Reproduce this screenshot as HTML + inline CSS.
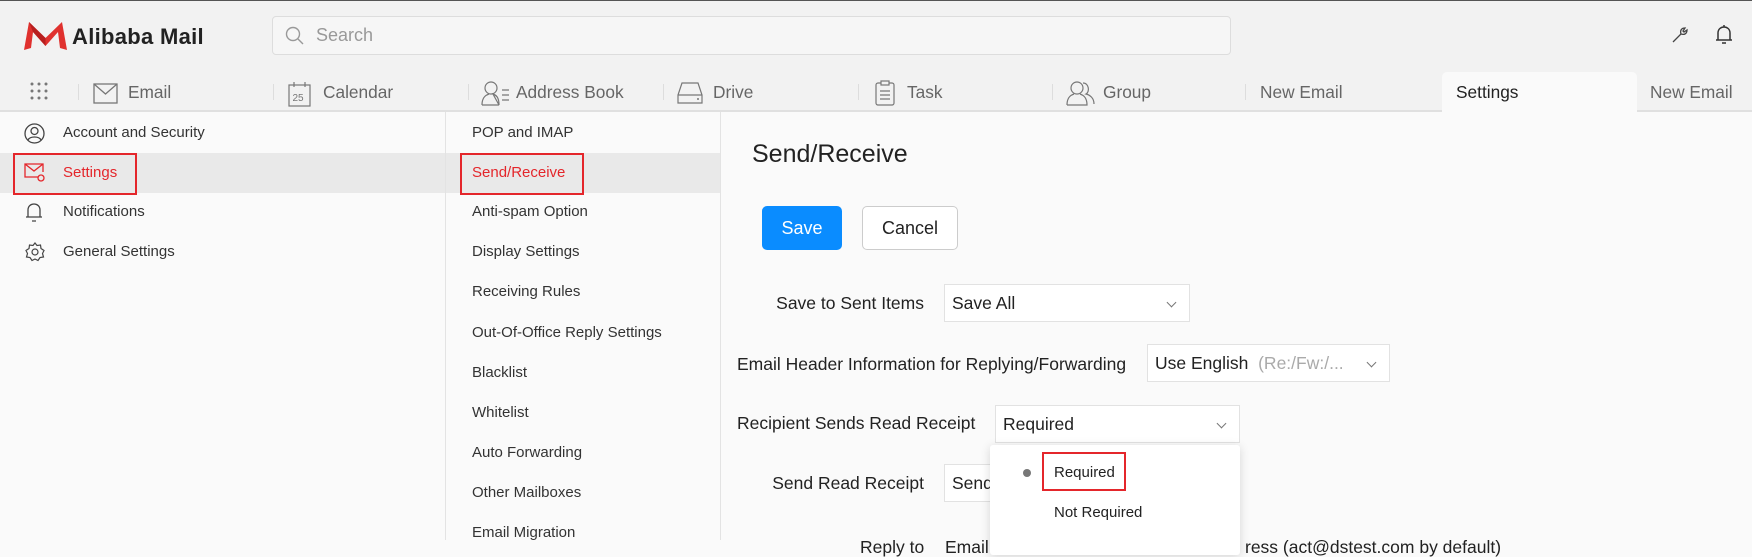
<!DOCTYPE html>
<html><head><meta charset="utf-8"><style>
*{margin:0;padding:0;box-sizing:border-box}
body{width:1752px;height:540px;overflow:hidden;background:#fafafa;font-family:"Liberation Sans",sans-serif;position:relative;color:#333}
.a{position:absolute}
.top{left:0;top:0;width:1752px;height:112px;background:#f2f2f2;border-top:1px solid #555}
.navline{left:0;top:110px;width:1752px;height:2px;background:#e0e0e0}
.nav{font-size:17.3px;color:#666;top:82px;line-height:20px}
.sep{width:1px;height:16px;background:#ddd;top:84px}
.item{font-size:15px;color:#333;line-height:20px}
.lbl{font-size:17.5px;color:#222;line-height:20px}
.sel{background:#fff;border:1px solid #e2e2e2;font-size:17.5px;color:#222;padding-left:7px;line-height:36px}
.chev{position:absolute;right:14px;top:14px;width:7px;height:7px;border-right:1.3px solid #777;border-bottom:1.3px solid #777;transform:rotate(45deg)}
.red{border:2px solid #e4262b}
</style></head><body>
<div class="a top"></div>
<div class="a navline"></div>
<svg class="a" style="left:24px;top:22px" width="43" height="28" viewBox="0 0 43 28"><path d="M0 28 L5 0 L21.5 16 L38 0 L43 28 L36 26 L34 10 L21.5 24 L9 10 L7 26Z" fill="#e0312e"/><path d="M5 0 L21.5 16 L21.5 24 L9 10Z" fill="#b81f1f"/></svg>
<div class="a" style="left:72px;top:24px;font-size:22px;font-weight:bold;color:#222;letter-spacing:.3px">Alibaba Mail</div>
<div class="a" style="left:272px;top:16px;width:959px;height:39px;border:1px solid #ddd;border-radius:4px;background:#f6f6f6"></div>
<svg class="a" style="left:285px;top:26px" width="20" height="20" viewBox="0 0 20 20"><circle cx="8" cy="8" r="6.5" fill="none" stroke="#999" stroke-width="1.4"/><path d="M13 13l5 5" stroke="#999" stroke-width="1.4"/></svg>
<div class="a" style="left:316px;top:25px;font-size:18px;color:#999">Search</div>
<svg class="a" style="left:1670px;top:25px" width="20" height="20" viewBox="0 0 20 20"><path d="M3 17 L11 9 C10 6 11 3 15 3 L13 6 L14 7 L17 5 C17 9 14 10 11 9" fill="none" stroke="#444" stroke-width="1.3"/></svg>
<svg class="a" style="left:1714px;top:24px" width="20" height="22" viewBox="0 0 20 22"><path d="M4 16 V9 C4 5 7 3 10 3 C13 3 16 5 16 9 V16 H4 Z M2 16 H18 M8 19 H12 M10 1 V3" fill="none" stroke="#333" stroke-width="1.5"/></svg>
<svg class="a" style="left:30px;top:82px" width="20" height="20"><g fill="#777"><circle cx="2" cy="2" r="1.5"/><circle cx="9" cy="2" r="1.5"/><circle cx="16" cy="2" r="1.5"/><circle cx="2" cy="9" r="1.5"/><circle cx="9" cy="9" r="1.5"/><circle cx="16" cy="9" r="1.5"/><circle cx="2" cy="16" r="1.5"/><circle cx="9" cy="16" r="1.5"/><circle cx="16" cy="16" r="1.5"/></g></svg>
<div class="a sep" style="left:78px"></div>
<svg class="a" style="left:93px;top:83px" width="25" height="21"><rect x="1" y="1" width="23" height="19" fill="none" stroke="#777" stroke-width="1.3"/><path d="M1 1 L12.5 11 L24 1" fill="none" stroke="#777" stroke-width="1.3"/></svg>
<div class="a nav" style="left:128px">Email</div>
<div class="a sep" style="left:273px"></div>
<svg class="a" style="left:288px;top:81px" width="24" height="26"><rect x="1" y="4" width="21" height="21" fill="none" stroke="#777" stroke-width="1.2"/><path d="M6 1v5M17 1v5" stroke="#777" stroke-width="1.2"/><text x="4.5" y="20" font-size="10" fill="#777" font-family="Liberation Sans">25</text></svg>
<div class="a nav" style="left:323px">Calendar</div>
<div class="a sep" style="left:468px"></div>
<svg class="a" style="left:481px;top:80px" width="30" height="26"><circle cx="10" cy="8" r="6" fill="none" stroke="#777" stroke-width="1.2"/><path d="M1 25 C1 17 5 15 8 14 M12 14 C15 15 18 17 18 25 Z M1 25 H18" fill="none" stroke="#777" stroke-width="1.2"/><path d="M21 10h7M21 15h7M21 20h7" stroke="#777" stroke-width="1.2"/></svg>
<div class="a nav" style="left:516px">Address Book</div>
<div class="a sep" style="left:663px"></div>
<svg class="a" style="left:677px;top:82px" width="26" height="22"><path d="M1 13 L5 1 H21 L25 13 V21 H1Z M1 13 H25" fill="none" stroke="#777" stroke-width="1.2"/><circle cx="21" cy="17" r="1" fill="#777"/></svg>
<div class="a nav" style="left:713px">Drive</div>
<div class="a sep" style="left:858px"></div>
<svg class="a" style="left:875px;top:80px" width="20" height="26"><rect x="1" y="3" width="18" height="22" rx="2" fill="none" stroke="#777" stroke-width="1.2"/><rect x="6" y="1" width="8" height="4" fill="#f2f2f2" stroke="#777" stroke-width="1.2"/><path d="M5 11h10M5 15h10M5 19h10" stroke="#777" stroke-width="1.2"/></svg>
<div class="a nav" style="left:907px">Task</div>
<div class="a sep" style="left:1052px"></div>
<svg class="a" style="left:1066px;top:80px" width="30" height="26"><circle cx="11" cy="8" r="6" fill="none" stroke="#777" stroke-width="1.2"/><path d="M1 25 C1 17 5 15 8 14 M14 14 C17 15 21 17 21 25 H1" fill="none" stroke="#777" stroke-width="1.2"/><path d="M17 3 C23 3 24 12 20 14 C24 15 28 18 28 24" fill="none" stroke="#777" stroke-width="1.2"/></svg>
<div class="a nav" style="left:1103px">Group</div>
<div class="a sep" style="left:1245px"></div>
<div class="a nav" style="left:1260px">New Email</div>
<div class="a" style="left:1442px;top:72px;width:195px;height:40px;background:#fafafa;border-radius:5px 5px 0 0"></div>
<div class="a nav" style="left:1456px;color:#222">Settings</div>
<div class="a nav" style="left:1650px">New Email</div>
<div class="a" style="left:0;top:153px;width:720px;height:40px;background:#e9e9e9"></div>
<div class="a" style="left:445px;top:112px;width:1px;height:428px;background:#e3e3e3"></div>
<div class="a" style="left:720px;top:112px;width:1px;height:428px;background:#e3e3e3"></div>
<svg class="a" style="left:24px;top:123px" width="21" height="21"><circle cx="10.5" cy="10.5" r="9.5" fill="none" stroke="#444" stroke-width="1.3"/><circle cx="10.5" cy="8" r="3.5" fill="none" stroke="#444" stroke-width="1.3"/><path d="M4 17 C6 13 15 13 17 17" fill="none" stroke="#444" stroke-width="1.3"/></svg>
<div class="a item" style="left:63px;top:123px">Account and Security</div>
<svg class="a" style="left:24px;top:163px" width="22" height="20"><path d="M14 14 H1 V1 H19 V9" fill="none" stroke="#e4262b" stroke-width="1.3"/><path d="M1 1 L10 8 L19 1" fill="none" stroke="#e4262b" stroke-width="1.3"/><circle cx="17" cy="15" r="3" fill="none" stroke="#e4262b" stroke-width="1.3"/></svg>
<div class="a item" style="left:63px;top:163px;color:#e4262b">Settings</div>
<div class="a red" style="left:13px;top:153px;width:124px;height:42px"></div>
<svg class="a" style="left:25px;top:202px" width="18" height="21"><path d="M3 15 V8 C3 4 6 2 9 2 C12 2 15 4 15 8 V15 Z M1 15 H17 M7 19 H11" fill="none" stroke="#444" stroke-width="1.3"/></svg>
<div class="a item" style="left:63px;top:202px">Notifications</div>
<svg class="a" style="left:25px;top:242px" width="20" height="20" viewBox="0 0 20 20"><path d="M10 1 L12 3.5 L15.5 3 L16 6.5 L19 8.5 L17.5 11.5 L18.5 15 L15 15.5 L13 18.5 L10 17 L7 18.5 L5 15.5 L1.5 15 L2.5 11.5 L1 8.5 L4 6.5 L4.5 3 L8 3.5Z" fill="none" stroke="#444" stroke-width="1.2"/><circle cx="10" cy="10" r="3" fill="none" stroke="#444" stroke-width="1.2"/></svg>
<div class="a item" style="left:63px;top:242px">General Settings</div>
<div class="a item" style="left:472px;top:123px">POP and IMAP</div>
<div class="a item" style="left:472px;top:163px;color:#e4262b">Send/Receive</div>
<div class="a red" style="left:460px;top:153px;width:124px;height:42px"></div>
<div class="a item" style="left:472px;top:202px">Anti-spam Option</div>
<div class="a item" style="left:472px;top:242px">Display Settings</div>
<div class="a item" style="left:472px;top:282px">Receiving Rules</div>
<div class="a item" style="left:472px;top:323px">Out-Of-Office Reply Settings</div>
<div class="a item" style="left:472px;top:363px">Blacklist</div>
<div class="a item" style="left:472px;top:403px">Whitelist</div>
<div class="a item" style="left:472px;top:443px">Auto Forwarding</div>
<div class="a item" style="left:472px;top:483px">Other Mailboxes</div>
<div class="a item" style="left:472px;top:523px">Email Migration</div>
<div class="a" style="left:752px;top:140px;font-size:25px;color:#222">Send/Receive</div>
<div class="a" style="left:762px;top:206px;width:80px;height:44px;background:#0a8cff;border-radius:5px;color:#fff;font-size:18px;line-height:44px;text-align:center">Save</div>
<div class="a" style="left:862px;top:206px;width:96px;height:44px;background:#fff;border:1px solid #ccc;border-radius:5px;color:#222;font-size:18px;line-height:42px;text-align:center">Cancel</div>
<div class="a lbl" style="left:700px;width:224px;text-align:right;top:293px">Save to Sent Items</div>
<div class="a sel" style="left:944px;top:284px;width:246px;height:38px">Save All<span class="chev"></span></div>
<div class="a lbl" style="left:737px;top:354px">Email Header Information for Replying/Forwarding</div>
<div class="a sel" style="left:1147px;top:344px;width:243px;height:38px">Use English&nbsp;&nbsp;<span style="color:#aaa">(Re:/Fw:/...</span><span class="chev"></span></div>
<div class="a lbl" style="left:737px;top:413px">Recipient Sends Read Receipt</div>
<div class="a sel" style="left:995px;top:405px;width:245px;height:38px">Required<span class="chev"></span></div>
<div class="a lbl" style="left:700px;width:224px;text-align:right;top:473px">Send Read Receipt</div>
<div class="a sel" style="left:944px;top:464px;width:246px;height:38px">Send</div>
<div class="a lbl" style="left:860px;top:537px">Reply to</div>
<div class="a lbl" style="left:945px;top:537px">Email</div>
<div class="a lbl" style="left:1245px;top:537px">ress (act@dstest.com by default)</div>
<div class="a" style="left:990px;top:445px;width:250px;height:110px;background:#fff;box-shadow:0 2px 10px rgba(0,0,0,.15);border-radius:3px"></div>
<div class="a" style="left:1023px;top:469px;width:8px;height:8px;border-radius:50%;background:#777"></div>
<div class="a" style="left:1054px;top:464px;font-size:15px;color:#222">Required</div>
<div class="a red" style="left:1042px;top:452px;width:84px;height:39px"></div>
<div class="a" style="left:1054px;top:504px;font-size:15px;color:#222">Not Required</div>
</body></html>
